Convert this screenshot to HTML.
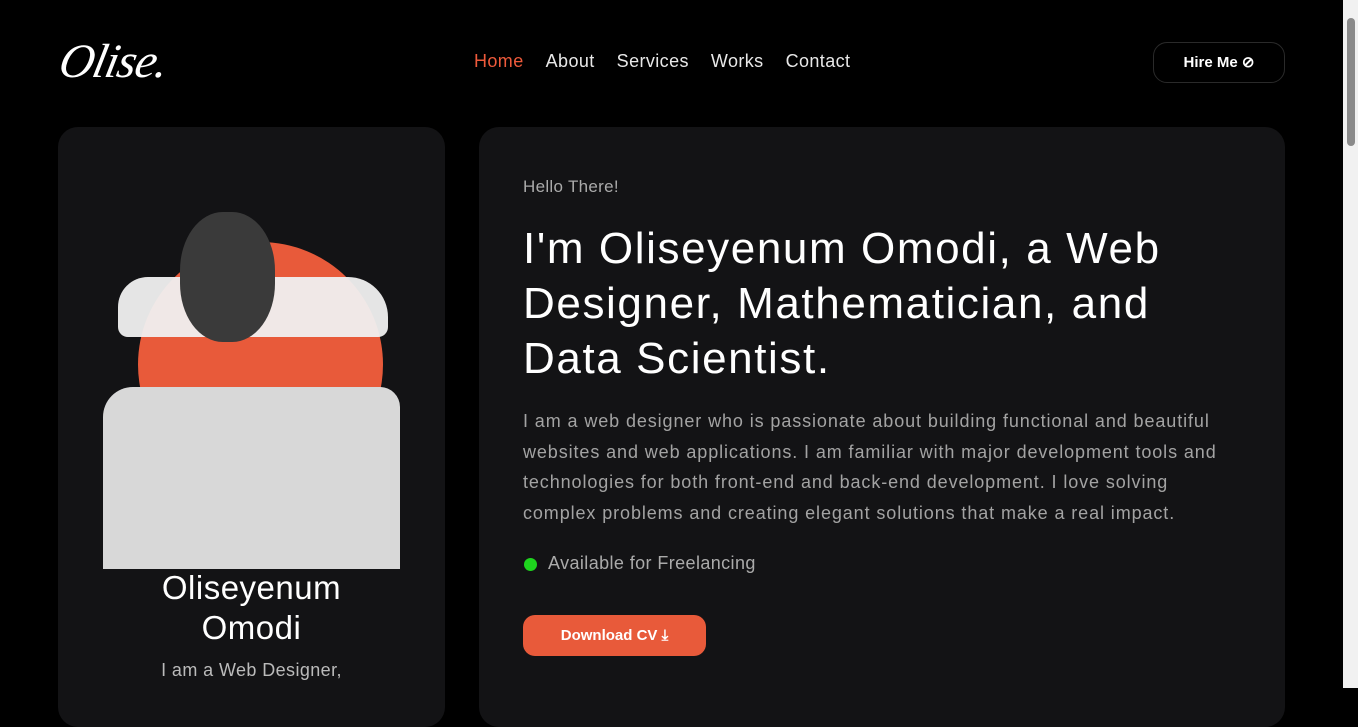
<!DOCTYPE html>
<html><head><style>
*{margin:0;padding:0;box-sizing:border-box}
body{width:1358px;height:688px;overflow:hidden;background:#000;font-family:"Liberation Sans",sans-serif;color:#fff;position:relative}
.logo{position:absolute;left:60px;top:34px;font-family:"Liberation Serif",serif;font-style:italic;font-size:48px;letter-spacing:-1px;color:#fff;transform:skewX(-12deg)}
nav{position:absolute;top:51px;left:474px;font-size:18px;color:#e8e8e8;letter-spacing:.4px;white-space:nowrap}
nav span{margin-right:22px}
.hire{position:absolute;left:1153px;top:42px;width:132px;height:41px;border:1px solid #2a2a2a;border-radius:14px;font-size:15px;font-weight:bold;text-align:center;line-height:39px}
.card{position:absolute;background:#131315;border-radius:20px;top:127px;height:600px}
.sb{position:absolute;right:0;top:0;width:15px;height:688px;background:#f1f1f1}
.sb div{position:absolute;left:4px;top:18px;width:8px;height:128px;background:#8a8a8a;border-radius:4px}
</style></head><body>
<div class="logo">Olise.</div>
<nav><span style="color:#ee5a3b">Home</span><span>About</span><span>Services</span><span>Works</span><span>Contact</span></nav>
<div class="hire">Hire Me ⊘</div>
<div class="card" style="left:58px;width:387px">
  <div style="position:absolute;left:80px;top:115px;width:245px;height:245px;border-radius:50%;background:#e85a3a"></div>
  <div style="position:absolute;left:60px;top:150px;width:270px;height:60px;background:#f0f0f0;border-radius:30px 40px 10px 10px;opacity:.95"></div>
  <div style="position:absolute;left:45px;top:260px;width:297px;height:182px;background:#d8d8d8;border-radius:30px 20px 0 0"></div>
  <div style="position:absolute;left:122px;top:85px;width:95px;height:130px;background:#3a3a3a;border-radius:45%"></div>
  <div style="position:absolute;left:0;top:441px;width:387px;text-align:center;font-size:33px;line-height:40px;letter-spacing:.5px">Oliseyenum<br>Omodi</div>
  <div style="position:absolute;left:0;top:533px;width:387px;text-align:center;font-size:18px;color:#bbb;letter-spacing:.4px">I am a Web Designer,</div>
</div>
<div class="card" style="left:479px;width:806px">
  <div style="position:absolute;left:44px;top:50px;font-size:17px;color:#aaa;letter-spacing:.3px">Hello There!</div>
  <div style="position:absolute;left:44px;top:94px;width:700px;font-size:44px;line-height:55px;letter-spacing:1.6px">I'm Oliseyenum Omodi, a Web Designer, Mathematician, and Data Scientist.</div>
  <div style="position:absolute;left:44px;top:279px;width:712px;font-size:18px;line-height:30.5px;color:#a3a3a3;letter-spacing:.9px">I am a web designer who is passionate about building functional and beautiful websites and web applications. I am familiar with major development tools and technologies for both front-end and back-end development. I love solving complex problems and creating elegant solutions that make a real impact.</div>
  <div style="position:absolute;left:45px;top:431px;width:13px;height:13px;border-radius:50%;background:#1ed41e"></div>
  <div style="position:absolute;left:69px;top:426px;font-size:18px;color:#aaa;letter-spacing:.4px">Available for Freelancing</div>
  <div style="position:absolute;left:44px;top:488px;width:183px;height:41px;border-radius:12px;background:#e85a3a;font-size:15px;font-weight:bold;line-height:41px;text-align:center">Download CV ⤓</div>
</div>
<div class="sb"><div></div></div>
</body></html>
